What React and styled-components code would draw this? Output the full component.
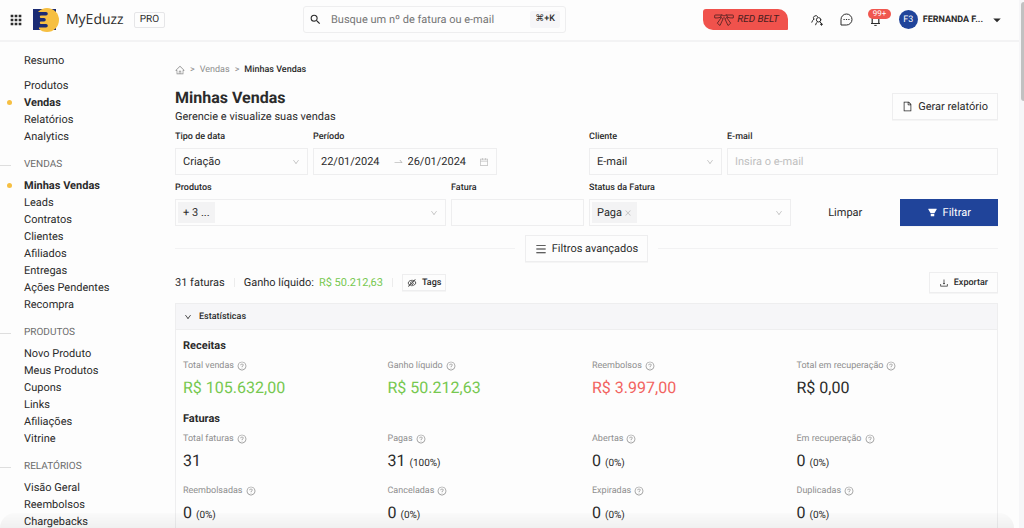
import styled, { createGlobalStyle } from 'styled-components';
import {
  AiFillFilter,
  AiOutlineCalendar,
  AiOutlineClose,
  AiOutlineDown,
  AiOutlineDownload,
  AiOutlineEyeInvisible,
  AiOutlineFile,
  AiOutlineHome,
  AiOutlineMenu,
  AiOutlineQuestionCircle,
  AiOutlineSwapRight,
} from 'react-icons/ai';
import { MdApps, MdArrowDropDown, MdSearch } from 'react-icons/md';

const GlobalStyle = createGlobalStyle`
  :root {
    --bg: #fdfdfd;
    --text: #2b2b2b;
    --muted: #8f8f8f;
    --border: #eeeeef;
    --soft: #f6f6f8;
    --blue: #20449a;
    --green: #76c84f;
    --red: #f2635f;
    --yellow: #f6bf42;
  }
  * {
    box-sizing: border-box;
  }
  body {
    margin: 0;
    overflow: hidden;
    background: var(--bg);
    color: var(--text);
    font-family: Roboto, sans-serif;
    font-size: 11px;
    line-height: 16px;
    text-rendering: geometricPrecision;
  }
  button, input, select {
    font: inherit;
    color: inherit;
    text-rendering: inherit;
  }
  a {
    color: inherit;
    text-decoration: none;
  }
  svg {
    flex: none;
  }
`;

const Window = styled.div`
  display: flex;
  height: 100vh;
  overflow: hidden;
`;

const Page = styled.div`
  flex: 1;
  min-width: 0;
`;

const ScrollTrack = styled.div`
  width: 5px;
  padding: 2px 0 0 2px;
  background: #f6f6f8;
`;

const ScrollThumb = styled.div`
  height: 99px;
  border-radius: 3px 0 0 3px;
  background: #c1c1c1;
`;

/* header */

const Header = styled.header`
  display: grid;
  grid-template-columns: 295px 263px 1fr;
  align-items: center;
  height: 42px;
  padding: 0 13px 1px 8px;
  border-bottom: 2px solid #f3f3f4;
`;

const HeaderLeft = styled.div`
  display: flex;
  align-items: center;
`;

const IconButton = styled.button`
  display: flex;
  align-items: center;
  justify-content: center;
  position: relative;
  padding: 0;
  border: 0;
  background: none;
`;

const Brand = styled.a`
  display: flex;
  align-items: center;
  gap: 7px;
  margin: 0 10px 0 9px;
  font-family: 'Open Sans', sans-serif;
  font-size: 14px;
  line-height: 20px;
`;

const Plan = styled.span`
  padding: 0 5px;
  border: 1px solid #e6e6e8;
  border-radius: 2px;
  font-size: 10px;
  line-height: 14px;
`;

const Search = styled.label`
  display: flex;
  align-items: center;
  height: 27px;
  padding: 0 5px;
  border: 1px solid var(--border);
  border-radius: 3px;
`;

const SearchInput = styled.input`
  flex: 1;
  min-width: 0;
  margin-left: 9px;
  padding: 0;
  border: 0;
  outline: 0;
  background: none;
  &::placeholder {
    color: #757575;
    opacity: 1;
  }
`;

const Shortcut = styled.kbd`
  padding: 0 5px;
  border-radius: 2px;
  background: var(--soft);
  font-family: Roboto, 'DejaVu Sans', sans-serif;
  font-size: 9px;
  font-weight: 500;
  line-height: 17px;
`;

const HeaderRight = styled.div`
  display: flex;
  align-items: center;
  justify-content: flex-end;
`;

const Belt = styled.a`
  display: flex;
  align-items: center;
  gap: 3px;
  height: 21px;
  margin-right: 23px;
  padding: 0 9px 0 11px;
  border-radius: 3px 10px 1px 10px;
  background: #f0524c;
  color: #4a2020;
  font-size: 10px;
  font-style: italic;
  white-space: nowrap;
`;

const HeaderIcons = styled.div`
  display: flex;
  align-items: center;
  gap: 17px;
  margin-right: 18px;
`;

const Badge = styled.span`
  position: absolute;
  left: -2px;
  bottom: 7px;
  padding: 0 5px;
  border-radius: 5px;
  background: #f0574f;
  color: #fff;
  font-size: 8px;
  line-height: 10px;
`;

const User = styled.button`
  display: flex;
  align-items: center;
  gap: 5px;
  padding: 0;
  border: 0;
  background: none;
  font-size: 9px;
  font-weight: 700;
  white-space: nowrap;
`;

const Avatar = styled.span`
  display: flex;
  align-items: center;
  justify-content: center;
  width: 19px;
  height: 19px;
  border-radius: 50%;
  background: var(--blue);
  color: #fff;
  font-weight: 400;
`;

/* sidebar */

const Body = styled.div`
  display: grid;
  grid-template-columns: 175px 1fr;
`;

const Sidebar = styled.nav`
  padding-top: 10px;
`;

const NavTitle = styled.h2`
  display: flex;
  align-items: center;
  gap: 13px;
  margin: 12px 0 4px;
  color: #6b6b6b;
  font-size: 10px;
  font-weight: 400;
  line-height: 16px;
  &::before {
    content: '';
    width: 11px;
    height: 1px;
    background: #dedede;
  }
`;

const NavList = styled.ul`
  margin: 0 0 8px;
  padding: 0;
  list-style: none;
`;

const NavLink = styled.a`
  display: flex;
  align-items: center;
  gap: 12px;
  padding-left: 7px;
  line-height: 17px;
  font-weight: ${({ $active }) => ($active ? 700 : 400)};
  &::before {
    content: '';
    width: 5px;
    height: 5px;
    border-radius: 50%;
    background: ${({ $active }) => ($active ? 'var(--yellow)' : 'transparent')};
  }
`;

/* content */

const Main = styled.main`
  padding: 20px 21px 0 0;
`;

const Breadcrumb = styled.div`
  display: flex;
  align-items: center;
  gap: 5px;
  height: 16px;
  color: var(--muted);
  font-size: 9px;
`;

const Current = styled.span`
  color: var(--text);
  font-weight: 500;
`;

const TitleRow = styled.div`
  display: flex;
  align-items: center;
  justify-content: space-between;
  margin-top: 10px;
`;

const Title = styled.h1`
  margin: 0;
  font-size: 16px;
  font-weight: 700;
  line-height: 20px;
`;

const Subtitle = styled.p`
  margin: 0;
  line-height: 17px;
`;

const Button = styled.button`
  display: flex;
  align-items: center;
  justify-content: center;
  gap: 5px;
  height: ${({ $size }) => ({ small: '17px', medium: '21px' })[$size] || '27px'};
  width: ${({ $block }) => ($block ? '100%' : 'auto')};
  padding: 0 ${({ $size }) => ($size === 'small' ? '4px' : '9px')};
  border: 1px solid ${({ $kind }) => ({ primary: 'var(--blue)', text: 'transparent' })[$kind] || 'var(--border)'};
  background: ${({ $kind }) => ($kind === 'primary' ? 'var(--blue)' : 'transparent')};
  box-shadow: ${({ $kind }) => ($kind === 'text' ? 'none' : '0 1px 0 rgba(0, 0, 0, 0.03)')};
  color: ${({ $kind }) => ($kind === 'primary' ? '#fff' : 'var(--text)')};
  font-size: ${({ $size }) => ($size ? '9px' : '11px')};
  font-weight: ${({ $size }) => ($size ? 500 : 400)};
  white-space: nowrap;
`;

const Filters = styled.form`
  display: grid;
  grid-template-columns: repeat(24, 1fr);
  align-items: end;
  gap: 5px;
  margin-top: 4px;
`;

const Field = styled.div`
  grid-column: span ${({ $span }) => $span};
  min-width: 0;
`;

const Label = styled.label`
  display: block;
  margin-bottom: 2px;
  font-size: 9px;
  font-weight: 500;
  line-height: 17px;
`;

const Control = styled.div`
  display: flex;
  align-items: center;
  gap: 4px;
  width: ${({ $width }) => $width || '100%'};
  height: 27px;
  padding: 0 7px ${({ $tags }) => ($tags ? '0 2px' : '0 7px')};
  border: 1px solid var(--border);
  svg {
    color: #bdbdbd;
  }
`;

const Input = styled.input`
  flex: 1;
  width: 0;
  min-width: 0;
  padding: 0;
  border: 0;
  outline: 0;
  background: none;
  &::placeholder {
    color: #c0c0c0;
    opacity: 1;
  }
`;

const Select = styled.select`
  flex: 1;
  min-width: 0;
  padding: 0;
  border: 0;
  outline: 0;
  appearance: none;
  background: none;
`;

const Tag = styled.span`
  display: flex;
  align-items: center;
  gap: 2px;
  height: 21px;
  padding: 0 5px;
  background: #f3f3f4;
`;

const Divider = styled.div`
  display: flex;
  align-items: center;
  gap: 10px;
  margin-top: 9px;
  &::before,
  &::after {
    content: '';
    flex: 1;
    height: 1px;
    background: #f2f2f3;
  }
`;

const Summary = styled.div`
  display: flex;
  align-items: center;
  margin-top: 10px;
  > :last-child {
    margin-left: auto;
  }
`;

const SummaryItem = styled.span`
  display: flex;
  gap: 5px;
  margin-right: 9px;
  padding-right: 10px;
  line-height: 16px;
  background: linear-gradient(#ececec, #ececec) right center / 1px 9px no-repeat;
`;

const Money = styled.span`
  color: var(--green);
`;

const Panel = styled.section`
  margin-top: 10px;
  border: 1px solid var(--border);
`;

const PanelHeader = styled.button`
  display: flex;
  align-items: center;
  gap: 7px;
  width: 100%;
  height: 26px;
  padding: 0 8px;
  border: 0;
  border-bottom: 1px solid var(--border);
  background: var(--soft);
  font-size: 9px;
  font-weight: 500;
`;

const PanelBody = styled.div`
  padding: 8px 7px 0;
`;

const GroupTitle = styled.h3`
  margin: 0 0 4px;
  font-size: 11px;
  font-weight: 700;
  line-height: 16px;
`;

const Stats = styled.dl`
  display: grid;
  grid-template-columns: repeat(4, 1fr);
  gap: 10px 11px;
  margin: 0 0 11px;
`;

const StatLabel = styled.dt`
  display: flex;
  align-items: center;
  gap: 3px;
  color: var(--muted);
  font-size: 9px;
  line-height: 16px;
`;

const StatValue = styled.dd`
  display: flex;
  align-items: baseline;
  gap: 4px;
  margin: 2px 0 0;
  color: ${({ $color }) => $color || 'var(--text)'};
  font-size: 16px;
  line-height: 24px;
  small {
    font-size: 10px;
    line-height: 12px;
  }
`;

const BottomShade = styled.div`
  position: fixed;
  right: 10px;
  bottom: 0;
  left: 0;
  height: 15px;
  border-radius: 30px 30px 0 0;
  background: linear-gradient(rgba(0, 0, 0, 0.01), rgba(0, 0, 0, 0.05));
  pointer-events: none;
`;

const menu = [
  { items: ['Resumo'] },
  { items: ['Produtos', 'Vendas', 'Relatórios', 'Analytics'], active: 'Vendas' },
  {
    title: 'VENDAS',
    items: ['Minhas Vendas', 'Leads', 'Contratos', 'Clientes', 'Afiliados', 'Entregas', 'Ações Pendentes', 'Recompra'],
    active: 'Minhas Vendas',
  },
  { title: 'PRODUTOS', items: ['Novo Produto', 'Meus Produtos', 'Cupons', 'Links', 'Afiliações', 'Vitrine'] },
  { title: 'RELATÓRIOS', items: ['Visão Geral', 'Reembolsos', 'Chargebacks'] },
];

const income = [
  { label: 'Total vendas', value: 'R$ 105.632,00', color: 'var(--green)' },
  { label: 'Ganho líquido', value: 'R$ 50.212,63', color: 'var(--green)' },
  { label: 'Reembolsos', value: 'R$ 3.997,00', color: 'var(--red)' },
  { label: 'Total em recuperação', value: 'R$ 0,00' },
];

const invoices = [
  { label: 'Total faturas', value: '31' },
  { label: 'Pagas', value: '31', percent: '(100%)' },
  { label: 'Abertas', value: '0', percent: '(0%)' },
  { label: 'Em recuperação', value: '0', percent: '(0%)' },
  { label: 'Reembolsadas', value: '0', percent: '(0%)' },
  { label: 'Canceladas', value: '0', percent: '(0%)' },
  { label: 'Expiradas', value: '0', percent: '(0%)' },
  { label: 'Duplicadas', value: '0', percent: '(0%)' },
];

const Logo = () => (
  <svg width="26" height="24" viewBox="0 0 26 24" aria-hidden="true">
    <path d="M0 1h23v21H0z" fill="#1b2b73" />
    <circle cx="14" cy="12" r="12" fill="#f6bf42" />
    <path
      d="M0 1h3v3h10a1.800 1.800 0 0 1 0 3.600H8a1 1 0 0 0 0 2.400h3a1.800 1.800 0 0 1 0 3.600H8a1 1 0 0 0 0 2.400h5a1.800 1.800 0 0 1 0 3.600H6V22H0z"
      fill="#1b2b73"
    />
  </svg>
);

const BeltIcon = () => (
  <svg width="20" height="12" viewBox="0 0 20 12" fill="none" stroke="currentColor" strokeWidth="0.8" strokeLinejoin="round" aria-hidden="true">
    <path d="M7.500 1H1.500Q.5 1 .6 2L.8 4Q4 4.200 7 3.200M12.500 1h6q1 0 .9 1L19.200 4Q16 4.200 13 3.200" />
    <path d="M7.500.7L10 2l2.500-1.300.8 2.300-2 1.700L10 3.500 8.700 4.700 6.700 3z" />
    <path d="M7 4L3.300 9.200l2.700 2.300L9 5M13 4l3.700 5.200-2.700 2.300L11 5" />
  </svg>
);

const PeopleIcon = () => (
  <svg width="12" height="12" viewBox="0 0 12 12" fill="none" stroke="currentColor" strokeLinecap="round" aria-hidden="true">
    <path d="M2.800 5.200A2.300 2.300 0 1 1 6.700 2.700M2.800 5.200Q1.300 6.200.8 8.200M4.600 10.800Q5 8.500 6.300 7.900" />
    <circle cx="7.600" cy="5.800" r="2.200" />
    <path d="M8.900 7.800l1.300 1.600M10.500 9.300v2M9.500 10.300h2" />
  </svg>
);

const ChatIcon = () => (
  <svg width="13" height="13" viewBox="0 0 13 13" fill="none" stroke="currentColor" aria-hidden="true">
    <path d="M1 12V6.500A5.500 5.500 0 1 1 6.500 12z" />
    <path d="M3.500 6.500h1.200M5.900 6.500h1.200M8.300 6.500h1.200" strokeWidth="1.200" />
  </svg>
);

const BellIcon = () => (
  <svg width="11" height="13" viewBox="0 0 11 13" fill="none" stroke="currentColor" aria-hidden="true">
    <path d="M1 10.500h9M2.200 10.500V5.500a3.300 3.300 0 0 1 6.600 0v5" strokeWidth="1.200" />
    <path d="M4.300 12.400h2.400" />
  </svg>
);

const StatGrid = ({ stats }) => (
  <Stats>
    {stats.map(({ label, value, percent, color }) => (
      <div key={label}>
        <StatLabel>
          {label}
          <AiOutlineQuestionCircle size={10} />
        </StatLabel>
        <StatValue $color={color}>
          {value}
          {percent && <small>{percent}</small>}
        </StatValue>
      </div>
    ))}
  </Stats>
);

const TopBar = () => (
  <Header>
    <HeaderLeft>
      <IconButton type="button" aria-label="Aplicativos">
        <MdApps size={16} />
      </IconButton>
      <Brand href="#">
        <Logo />
        MyEduzz
      </Brand>
      <Plan>PRO</Plan>
    </HeaderLeft>
    <Search>
      <MdSearch size={13} />
      <SearchInput type="search" aria-label="Buscar" placeholder="Busque um nº de fatura ou e-mail" />
      <Shortcut>⌘+K</Shortcut>
    </Search>
    <HeaderRight>
      <Belt href="#">
        <BeltIcon />
        RED BELT
      </Belt>
      <HeaderIcons>
        <IconButton type="button" aria-label="Afiliados">
          <PeopleIcon />
        </IconButton>
        <IconButton type="button" aria-label="Mensagens">
          <ChatIcon />
        </IconButton>
        <IconButton type="button" aria-label="Notificações">
          <BellIcon />
          <Badge>99+</Badge>
        </IconButton>
      </HeaderIcons>
      <User type="button">
        <Avatar>F3</Avatar>
        FERNANDA F...
        <MdArrowDropDown size={18} />
      </User>
    </HeaderRight>
  </Header>
);

const SideMenu = () => (
  <Sidebar>
    {menu.map(({ title, items, active }) => (
      <div key={items[0]}>
        {title && <NavTitle>{title}</NavTitle>}
        <NavList>
          {items.map((item) => (
            <li key={item}>
              <NavLink href="#" $active={item === active}>
                {item}
              </NavLink>
            </li>
          ))}
        </NavList>
      </div>
    ))}
  </Sidebar>
);

const FilterForm = () => (
  <Filters onSubmit={(event) => event.preventDefault()}>
    <Field $span={4}>
      <Label htmlFor="date-type">Tipo de data</Label>
      <Control>
        <Select id="date-type">
          <option>Criação</option>
        </Select>
        <AiOutlineDown size={8} />
      </Control>
    </Field>
    <Field $span={8}>
      <Label htmlFor="period">Período</Label>
      <Control $width="184px">
        <Input id="period" defaultValue="22/01/2024" />
        <AiOutlineSwapRight size={11} />
        <Input aria-label="Fim do período" defaultValue="26/01/2024" />
        <AiOutlineCalendar size={10} />
      </Control>
    </Field>
    <Field $span={4}>
      <Label htmlFor="client">Cliente</Label>
      <Control>
        <Select id="client">
          <option>E-mail</option>
        </Select>
        <AiOutlineDown size={8} />
      </Control>
    </Field>
    <Field $span={8}>
      <Label htmlFor="email">E-mail</Label>
      <Control>
        <Input id="email" type="email" placeholder="Insira o e-mail" />
      </Control>
    </Field>
    <Field $span={8}>
      <Label htmlFor="products">Produtos</Label>
      <Control $tags>
        <Tag>+ 3 ...</Tag>
        <Input id="products" />
        <AiOutlineDown size={8} />
      </Control>
    </Field>
    <Field $span={4}>
      <Label htmlFor="invoice">Fatura</Label>
      <Control>
        <Input id="invoice" />
      </Control>
    </Field>
    <Field $span={6}>
      <Label htmlFor="status">Status da Fatura</Label>
      <Control $tags>
        <Tag>
          Paga
          <AiOutlineClose size={8} />
        </Tag>
        <Input id="status" />
        <AiOutlineDown size={8} />
      </Control>
    </Field>
    <Field $span={3}>
      <Button type="reset" $kind="text" $block>
        Limpar
      </Button>
    </Field>
    <Field $span={3}>
      <Button type="submit" $kind="primary" $block>
        <AiFillFilter size={11} />
        Filtrar
      </Button>
    </Field>
  </Filters>
);

export default function App() {
  return (
    <Window>
      <GlobalStyle />
      <Page>
        <TopBar />
        <Body>
          <SideMenu />
          <Main>
            <Breadcrumb>
              <AiOutlineHome size={10} />
              <span>&gt;</span>
              <a href="#">Vendas</a>
              <span>&gt;</span>
              <Current>Minhas Vendas</Current>
            </Breadcrumb>
            <TitleRow>
              <div>
                <Title>Minhas Vendas</Title>
                <Subtitle>Gerencie e visualize suas vendas</Subtitle>
              </div>
              <Button type="button">
                <AiOutlineFile size={11} />
                Gerar relatório
              </Button>
            </TitleRow>
            <FilterForm />
            <Divider>
              <Button type="button">
                <AiOutlineMenu size={12} />
                Filtros avançados
              </Button>
            </Divider>
            <Summary>
              <SummaryItem>31 faturas</SummaryItem>
              <SummaryItem>
                Ganho líquido: <Money>R$ 50.212,63</Money>
              </SummaryItem>
              <Button type="button" $size="small">
                <AiOutlineEyeInvisible size={10} />
                Tags
              </Button>
              <Button type="button" $size="medium">
                <AiOutlineDownload size={10} />
                Exportar
              </Button>
            </Summary>
            <Panel>
              <PanelHeader type="button" aria-expanded="true">
                <AiOutlineDown size={8} />
                Estatísticas
              </PanelHeader>
              <PanelBody>
                <GroupTitle>Receitas</GroupTitle>
                <StatGrid stats={income} />
                <GroupTitle>Faturas</GroupTitle>
                <StatGrid stats={invoices} />
              </PanelBody>
            </Panel>
          </Main>
        </Body>
      </Page>
      <ScrollTrack>
        <ScrollThumb />
      </ScrollTrack>
      <BottomShade />
    </Window>
  );
}
